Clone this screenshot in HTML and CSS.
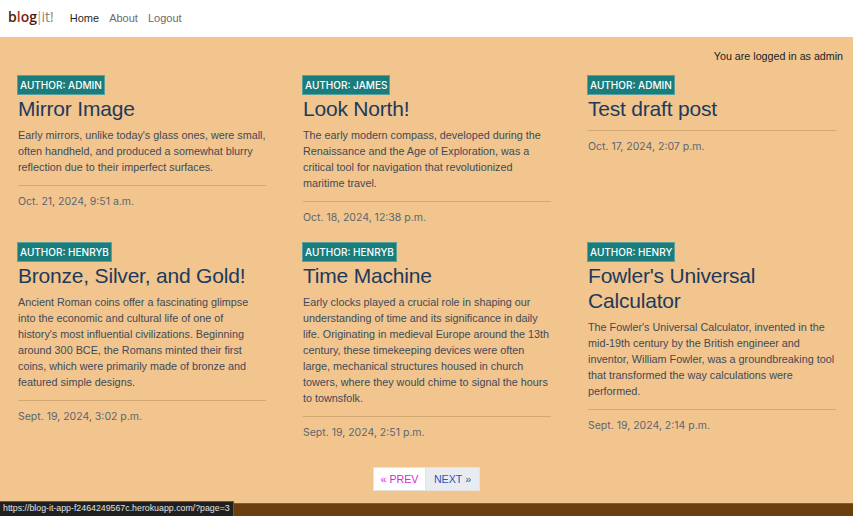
FILE: index.html
```html
<!DOCTYPE html>
<html lang="en">
<head>
<meta charset="utf-8">
<title>blog|it!</title>
<link rel="stylesheet" href="styles.css">
</head>
<body>
<nav class="navbar">
  <a class="brand" href="#"><span class="b1">b</span><span class="b2">l</span><span class="b3">o</span><span class="b1">g</span><span class="sep">|</span><span class="it">it!</span></a>
  <ul class="nav-links">
    <li><a class="active" href="#">Home</a></li>
    <li><a href="#">About</a></li>
    <li><a href="#">Logout</a></li>
  </ul>
</nav>
<main class="page">
  <p class="login-status">You are logged in as admin</p>
  <div class="posts">
    <article class="post">
      <span class="badge">Author: admin</span>
      <h2 class="post-title">Mirror Image</h2>
      <p class="excerpt">Early mirrors, unlike today's glass ones, were small, often handheld, and produced a somewhat blurry reflection due to their imperfect surfaces.</p>
      <hr class="divider">
      <p class="date">Oct. 21, 2024, 9:51 a.m.</p>
    </article>
    <article class="post">
      <span class="badge">Author: james</span>
      <h2 class="post-title">Look North!</h2>
      <p class="excerpt">The early modern compass, developed during the Renaissance and the Age of Exploration, was a critical tool for navigation that revolutionized maritime travel.</p>
      <hr class="divider">
      <p class="date">Oct. 18, 2024, 12:38 p.m.</p>
    </article>
    <article class="post">
      <span class="badge">Author: admin</span>
      <h2 class="post-title">Test draft post</h2>
      <hr class="divider">
      <p class="date">Oct. 17, 2024, 2:07 p.m.</p>
    </article>
    <article class="post">
      <span class="badge">Author: henryb</span>
      <h2 class="post-title">Bronze, Silver, and Gold!</h2>
      <p class="excerpt">Ancient Roman coins offer a fascinating glimpse into the economic and cultural life of one of<br>history's most influential civilizations. Beginning around 300 BCE, the Romans minted their first coins, which were primarily made of bronze and featured simple designs.</p>
      <hr class="divider">
      <p class="date">Sept. 19, 2024, 3:02 p.m.</p>
    </article>
    <article class="post">
      <span class="badge">Author: henryb</span>
      <h2 class="post-title">Time Machine</h2>
      <p class="excerpt">Early clocks played a crucial role in shaping our understanding of time and its significance in daily life. Originating in medieval Europe around the 13th century, these timekeeping devices were often large, mechanical structures housed in church towers, where they would chime to signal the hours to townsfolk.</p>
      <hr class="divider">
      <p class="date">Sept. 19, 2024, 2:51 p.m.</p>
    </article>
    <article class="post">
      <span class="badge">Author: henry</span>
      <h2 class="post-title">Fowler's Universal Calculator</h2>
      <p class="excerpt">The Fowler's Universal Calculator, invented in the mid-19th century by the British engineer and inventor, William Fowler, was a groundbreaking tool that transformed the way calculations were performed.</p>
      <hr class="divider">
      <p class="date">Sept. 19, 2024, 2:14 p.m.</p>
    </article>
  </div>
  <nav class="pagination">
    <a class="page-link prev" href="#">&laquo; PREV</a>
    <a class="page-link next" href="#">NEXT &raquo;</a>
  </nav>
</main>
<footer class="footer"></footer>
<div class="status-url">https://blog-it-app-f2464249567c.herokuapp.com/?page=3</div>
</body>
</html>
```
FILE: styles.css
```css
* { box-sizing: border-box; }
html, body { margin: 0; padding: 0; }
body {
  font-family: "Liberation Sans", Arial, sans-serif;
  background: #f1c58d;
  color: #3a4656;
  height: 516px;
  overflow: hidden;
  display: flex;
  flex-direction: column;
}
a { text-decoration: none; }

.navbar {
  background: #ffffff;
  height: 37px;
  display: flex;
  align-items: center;
  padding: 0 8px 4px;
  flex-shrink: 0;
}
.brand {
  font-size: 14px;
  font-weight: 600;
  margin-right: 16px;
  font-family: "Open Sans", "Liberation Sans", sans-serif;
}
.b1 { color: #4b1a0b; }
.b2 { color: #c2321f; }
.b3 { color: #7a1c12; }
.sep { color: #b8aca6; font-weight: 300; font-family: "Liberation Sans", sans-serif; margin: 0 0.5px; }
.it { color: #8d7f78; font-weight: 400; }
.nav-links {
  list-style: none;
  margin: 0;
  padding: 0;
  display: flex;
  gap: 10px;
}
.nav-links a {
  font-size: 11px;
  color: #6b6b6b;
}
.nav-links a.active { color: #1f1f1f; }

.page {
  flex: 1;
  padding: 0 17px 0 18px;
}
.login-status {
  margin: 11px -7px 11px 0;
  text-align: right;
  font-size: 10.7px;
  line-height: 16px;
  color: #222222;
}
.posts {
  display: grid;
  grid-template-columns: repeat(3, 1fr);
  column-gap: 37px;
}
.post {
  display: flex;
  flex-direction: column;
  align-items: flex-start;
  margin-bottom: 16px;
}
.badge {
  display: inline-block;
  height: 20px;
  line-height: 18px;
  padding: 0 2px;
  margin-left: -1px;
  background: #1a7c7b;
  border: 1px solid #5aa09c;
  color: #ffffff;
  font-family: Inter, "Liberation Sans", sans-serif;
  font-size: 10px;
  font-weight: 500;
  text-transform: uppercase;
}
.post-title {
  margin: 1px 0 6px;
  font-size: 21px;
  line-height: 25px;
  font-weight: 400;
  color: #1d3a5c;
  letter-spacing: -0.2px;
}
.excerpt {
  margin: 0 0 10px;
  font-size: 10.8px;
  line-height: 16px;
  color: #3f4a59;
}
.divider {
  align-self: stretch;
  margin: 0 0 8px;
  border: 0;
  border-top: 1px solid #d4a873;
}
.post-title + .divider { margin-top: 3px; }
.date {
  margin: 0;
  font-family: Inter, "Liberation Sans", sans-serif;
  font-size: 10.5px;
  line-height: 16px;
  color: #5c6673;
}

.pagination {
  display: flex;
  justify-content: center;
  margin-top: 10px;
  margin-left: -1px;
}
.page-link {
  height: 24px;
  line-height: 22px;
  font-size: 10.7px;
  border: 1px solid #e6e2de;
}
.prev {
  background: #ffffff;
  color: #dd25d8;
  width: 53px;
  text-align: center;
}
.next {
  background: #e8ecf1;
  color: #2a54c0;
  width: 54px;
  text-align: center;
  border-left: 0;
}
.footer {
  height: 13px;
  background: #6b3e10;
  border-top: 1px solid #8a5a28;
  flex-shrink: 0;
}
.status-url {
  position: absolute;
  left: 0;
  bottom: 0;
  width: 234px;
  height: 15px;
  line-height: 13px;
  padding: 0 3px;
  background: #202020;
  border: 1px solid #5a5a5a;
  border-left: 0;
  border-bottom: 0;
  color: #e2e2e2;
  font-size: 8.8px;
  white-space: nowrap;
  overflow: hidden;
}
```
